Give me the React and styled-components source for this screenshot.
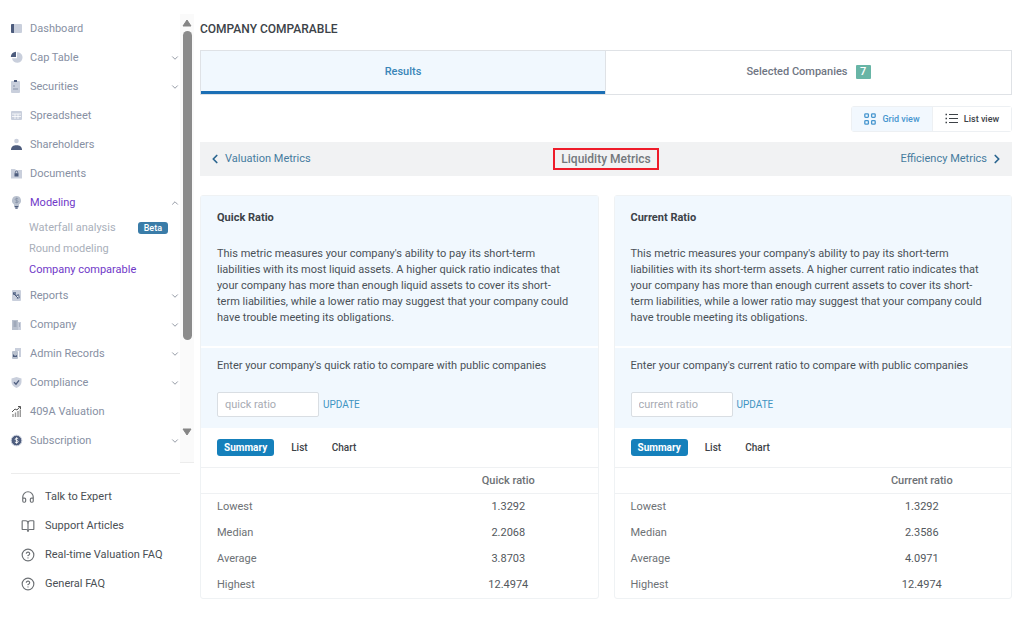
import React, { useState } from 'react';
import styled, { createGlobalStyle } from 'styled-components';
import { BookOpen, ChevronDown, ChevronLeft, ChevronRight, ChevronUp, CircleQuestionMark, Headphones } from 'lucide-react';

const GlobalStyle = createGlobalStyle`
  * {
    box-sizing: border-box;
  }
  body {
    margin: 0;
    background: #fff;
    color: #4a5157;
    font-family: Roboto, "Liberation Sans", sans-serif;
    font-size: 11px;
    line-height: 16px;
  }
  button, input {
    font: inherit;
    color: inherit;
  }
  h1, h2, p {
    margin: 0;
  }
  a {
    color: inherit;
    text-decoration: none;
  }
`;

const Page = styled.div`
  display: flex;
  align-items: flex-start;
`;

const Sidebar = styled.aside`
  flex: none;
  width: 194px;
  padding-top: 14px;
`;

const ScrollArea = styled.div`
  display: flex;
`;

const NavList = styled.nav`
  flex: 1;
  padding-bottom: 8px;
`;

const NavItem = styled.a`
  display: flex;
  align-items: center;
  height: 29px;
  padding-left: 10px;
  gap: 7px;
  color: ${props => (props.$active ? '#7038c8' : '#8790a3')};
  > svg:last-child:not(:first-child) {
    margin-left: auto;
    color: #7f8794;
  }
`;

const SubList = styled.div`
  padding: 0 0 1px 29px;
`;

const SubItem = styled.a`
  display: flex;
  align-items: center;
  justify-content: space-between;
  height: 21px;
  padding-right: 12px;
  white-space: nowrap;
  color: ${props => (props.$active ? '#7038c8' : '#a9afba')};
`;

const Beta = styled.span`
  padding: 0 6px;
  border-radius: 3px;
  background: #3a7ca8;
  color: #fff;
  font-size: 9px;
  font-weight: 500;
  line-height: 12px;
`;

const Scrollbar = styled.div`
  display: flex;
  flex-direction: column;
  align-items: center;
  width: 14px;
  padding: 5px 0 26px;
  background: #fafafa;
  border-bottom: 1px solid #ececec;
`;

const Thumb = styled.div`
  width: 9px;
  height: 309px;
  margin: 4px 0 auto;
  border-radius: 5px;
  background: #8b8b8b;
`;

const HelpList = styled.nav`
  margin: 10px 14px 0 11px;
  padding: 8px 0 0 10px;
  border-top: 1px solid #ececec;
`;

const HelpItem = styled.a`
  display: flex;
  align-items: center;
  gap: 10px;
  height: 29px;
  white-space: nowrap;
  color: #4a4f54;
  svg {
    color: #6d7175;
  }
`;

const Main = styled.main`
  flex: 1;
  min-width: 0;
  padding: 21px 12px 22px 6px;
`;

const Title = styled.h1`
  color: #3c4248;
  font-size: 12px;
  font-weight: 500;
  line-height: 16px;
`;

const Tabs = styled.div`
  display: grid;
  grid-template-columns: 1fr 1fr;
  height: 45px;
  margin-top: 13px;
  border: 1px solid #dfe2e6;
`;

const Tab = styled.button`
  display: flex;
  align-items: center;
  justify-content: center;
  gap: 8px;
  padding: 0 0 2px;
  border: 0;
  border-right: ${props => (props.$active ? '1px solid #dfe2e6' : '0')};
  background: ${props => (props.$active ? '#f1f8fe' : '#fff')};
  box-shadow: ${props => (props.$active ? 'inset 0 -3px #1b6fb5' : 'none')};
  color: ${props => (props.$active ? '#3a86b8' : '#6f7683')};
  font-weight: 500;
`;

const Count = styled.span`
  width: 15px;
  border-radius: 1px;
  background: #68b5a6;
  color: #fff;
  line-height: 14px;
`;

const ViewToggle = styled.div`
  display: flex;
  width: max-content;
  margin: 11px 0 10px auto;
  border: 1px solid #edf0f3;
  border-radius: 3px;
`;

const ViewButton = styled.button`
  display: flex;
  align-items: center;
  justify-content: center;
  gap: 6px;
  width: ${props => (props.$active ? '81px' : '78px')};
  height: 24px;
  padding: 0;
  border: 0;
  border-right: ${props => (props.$active ? '1px solid #edf0f3' : '0')};
  background: ${props => (props.$active ? '#f2f8fe' : '#fff')};
  color: ${props => (props.$active ? '#4796cf' : '#3d4247')};
  font-size: 9px;
  font-weight: 500;
`;

const MetricNav = styled.nav`
  display: grid;
  grid-template-columns: 1fr auto 1fr;
  align-items: center;
  height: 34px;
  padding: 0 8px;
  background: #f1f2f3;
`;

const MetricLink = styled.a`
  display: flex;
  align-items: center;
  justify-self: ${props => (props.$end ? 'end' : 'start')};
  gap: 3px;
  color: #467c9f;
  svg {
    color: #2b6690;
  }
`;

const MetricName = styled.h2`
  padding: 1px 6px;
  border: 2px solid #ee1c2a;
  color: #73777b;
  font-size: 12px;
  font-weight: 500;
  line-height: 16px;
`;

const Cards = styled.div`
  display: grid;
  grid-template-columns: 1fr 1fr;
  gap: 15px;
  margin-top: 19px;
`;

const Card = styled.section`
  border: 1px solid #eff2f4;
  border-radius: 3px;
`;

const Intro = styled.div`
  padding: 14px 16px 20px;
  background: #f1f8fe;
`;

const CardTitle = styled.h2`
  margin-bottom: 20px;
  color: #3c4248;
  font-size: 11px;
  font-weight: 700;
  line-height: 16px;
`;

const Description = styled.p`
  white-space: pre-line;
`;

const Compare = styled.form`
  padding: 10px 16px 11px;
  border-top: 2px solid #fff;
  background: #f1f8fe;
`;

const Entry = styled.div`
  display: flex;
  align-items: center;
  gap: 4px;
  margin-top: 18px;
`;

const RatioInput = styled.input`
  width: 102px;
  height: 25px;
  padding: 0 7px;
  border: 1px solid #d9dee3;
  border-radius: 2px;
  background: #fff;
  &::placeholder {
    color: #a7abb3;
  }
`;

const Update = styled.button`
  padding: 0;
  border: 0;
  background: none;
  color: #3f94c2;
  font-size: 10px;
`;

const Modes = styled.div`
  display: flex;
  align-items: center;
  gap: 10px;
  height: 39px;
  padding: 0 16px;
`;

const Mode = styled.button`
  padding: 0 7px;
  border: 0;
  border-radius: 3px;
  background: ${props => (props.$active ? '#1580bb' : 'none')};
  color: ${props => (props.$active ? '#fff' : '#3d4247')};
  font-size: 10px;
  font-weight: ${props => (props.$active ? 700 : 500)};
  line-height: 17px;
`;

const Table = styled.table`
  width: 100%;
  table-layout: fixed;
  border-collapse: collapse;
  color: #6d7175;
  th, td {
    height: 26px;
    padding: 0;
    font-weight: 400;
  }
  thead th {
    border-top: 1px solid #eff1f3;
    border-bottom: 1px solid #eff1f3;
    font-weight: 500;
  }
  tbody th {
    padding-left: 16px;
    text-align: left;
  }
  td {
    color: #53585d;
    text-align: center;
  }
`;

const LabelColumn = styled.col`
  width: 55%;
`;

const light = '#c9cfdc';
const dark = '#4d5c7d';

const icons = {
  dashboard: <><rect x="1" y="2" width="11" height="9" rx="1" fill={light} /><path d="M2 2h2v9H2a1 1 0 0 1-1-1V3a1 1 0 0 1 1-1z" fill={dark} /></>,
  pie: <><path d="M7 1.200a5.300 5.300 0 1 1-5 6h5z" fill={light} /><path d="M6 .8v5.200H.8A5.200 5.200 0 0 1 6 .8z" fill={dark} /></>,
  clipboard: <><rect x="1" y="1" width="9" height="12" rx="1" fill={light} /><path d="M4 0h3v2H4z" fill={dark} /><path d="M3 6h2M3 9h5" stroke="#8994aa" /></>,
  sheet: <><rect x="1" y="2" width="11" height="9" rx="1" fill={light} /><path d="M2 5h9M2 7.500h9M5 5v5M8 5v5" stroke="#fff" strokeWidth=".8" /></>,
  person: <><circle cx="6.500" cy="3" r="2.300" fill={light} /><path d="M1 12c0-3.500 2.500-4.700 5.500-4.700S12 8.500 12 12z" fill={dark} /></>,
  folder: <><path d="M1 2h4l1 1h6v8.500H1z" fill={light} /><rect x="4.500" y="6.200" width="4" height="3.300" fill={dark} /><path d="M5.300 6.200V5.200a1.200 1.200 0 0 1 2.400 0v1" fill="none" stroke={dark} strokeWidth=".8" /></>,
  bulb: <><path d="M6.500 0a4.600 4.600 0 0 0-2.500 8.400V10h5V8.400A4.600 4.600 0 0 0 6.500 0z" fill="#b9c1ce" /><path d="M8.200 3C7 2 5.200 2.400 5.200 3.500c0 1.500 3 .8 3 2.200 0 1.100-2 1.300-3.100.4M6.700 1.700v5.500" fill="none" stroke="#8792a7" strokeWidth=".8" /><path d="M4.500 10.700h4M5.300 12.200h2.400" stroke={dark} strokeWidth="1.200" /></>,
  report: <><rect x="2" y="1" width="9" height="11" rx="1" fill={light} /><path d="M3 3h3v3H3zM6 6l3-1 1 4-3 1z" fill="#71809c" /><circle cx="7.500" cy="8" r="1" fill="#fff" /><path d="M3 4l5 5" stroke={dark} /></>,
  building: <><rect x="2" y="2" width="6" height="10" fill="#b9c1ce" /><path d="M8 4h3v8H8z" fill={light} /><path d="M3.500 4h3M3.500 6h3M3.500 8h3M9 6h1M9 8h1" stroke="#8792a7" /></>,
  records: <><path d="M5 1h6v9H9V4H5z" fill={light} /><rect x="2" y="4" width="6" height="8" rx="1" fill="#b9c1ce" /><path d="M3 10V7l2 2 2-1v2z" fill={dark} /></>,
  shield: <><path d="M6.500 1L11.500 2.500V6c0 3-2.500 4.800-5 6C4 10.800 1.500 9 1.500 6V2.500z" fill={light} /><path d="M4 6.300l2 1.900 3-3.800" fill="none" stroke={dark} strokeWidth="1.300" /></>,
  growth: <><path d="M3 12V9M5.500 12V7.500M8 12V6M10.300 12V4.500" stroke="#9a9a9a" strokeWidth="1.400" /><path d="M2 7l3-3 2 1 3-3.300M8 1.500h2.500V4" fill="none" stroke="#555" strokeWidth="1" /></>,
  dollar: <><circle cx="6.500" cy="6.500" r="5.300" fill={dark} stroke={light} strokeWidth="1" /><path d="M8.200 4.800c-1-.9-3-.6-3 .5 0 1.400 3 .8 3 2.300 0 1.200-2.100 1.400-3.300.4M6.600 3.300v6.400" fill="none" stroke="#fff" strokeWidth=".9" /></>,
};

const NavIcon = ({ name }) => (
  <svg width="13" height="13" viewBox="0 0 13 13" aria-hidden="true">{icons[name]}</svg>
);

const GridIcon = () => (
  <svg width="12" height="12" viewBox="0 0 12 12" fill="none" stroke="currentColor" strokeWidth="1.3" aria-hidden="true">
    <rect x=".8" y=".8" width="3.600" height="3.600" rx=".8" />
    <rect x="7.600" y=".8" width="3.600" height="3.600" rx=".8" />
    <rect x=".8" y="7.600" width="3.600" height="3.600" rx=".8" />
    <rect x="7.600" y="7.600" width="3.600" height="3.600" rx=".8" />
  </svg>
);

const ListIcon = () => (
  <svg width="13" height="12" viewBox="0 0 13 12" stroke="currentColor" strokeWidth="1" aria-hidden="true">
    <path d="M4 1.500h9M4 5.500h9M4 9.500h9" />
    <path d="M.5 1.500H2M.5 5.500H2M.5 9.500H2" strokeWidth="1.600" />
  </svg>
);

const ScrollArrow = ({ down }) => (
  <svg width="10" height="8" viewBox="0 0 10 8" aria-hidden="true">
    <path d={down ? 'M1 1h8L5 7z' : 'M1 7h8L5 1z'} fill="#858585" stroke="#858585" strokeLinejoin="round" />
  </svg>
);

const topItems = [
  ['Dashboard', 'dashboard'],
  ['Cap Table', 'pie', true],
  ['Securities', 'clipboard', true],
  ['Spreadsheet', 'sheet'],
  ['Shareholders', 'person'],
  ['Documents', 'folder'],
];

const lowerItems = [
  ['Reports', 'report', true],
  ['Company', 'building', true],
  ['Admin Records', 'records', true],
  ['Compliance', 'shield', true],
  ['409A Valuation', 'growth'],
  ['Subscription', 'dollar', true],
];

const helpItems = [
  ['Talk to Expert', Headphones],
  ['Support Articles', BookOpen],
  ['Real-time Valuation FAQ', CircleQuestionMark],
  ['General FAQ', CircleQuestionMark],
];

const metrics = [
  {
    name: 'quick',
    title: 'Quick',
    text: `This metric measures your company's ability to pay its short-term
liabilities with its most liquid assets. A higher quick ratio indicates that
your company has more than enough liquid assets to cover its short-
term liabilities, while a lower ratio may suggest that your company could
have trouble meeting its obligations.`,
    rows: [['Lowest', '1.3292'], ['Median', '2.2068'], ['Average', '3.8703'], ['Highest', '12.4974']],
  },
  {
    name: 'current',
    title: 'Current',
    text: `This metric measures your company's ability to pay its short-term
liabilities with its short-term assets. A higher current ratio indicates that
your company has more than enough current assets to cover its short-
term liabilities, while a lower ratio may suggest that your company could
have trouble meeting its obligations.`,
    rows: [['Lowest', '1.3292'], ['Median', '2.3586'], ['Average', '4.0971'], ['Highest', '12.4974']],
  },
];

const NavItems = ({ items }) => items.map(([label, icon, expandable]) => (
  <NavItem href="#" key={label}>
    <NavIcon name={icon} />
    {label}
    {expandable && <ChevronDown size={10} />}
  </NavItem>
));

const MetricCard = ({ metric }) => {
  const [mode, setMode] = useState('Summary');
  const id = `${metric.name}-ratio`;
  return (
    <Card>
      <Intro>
        <CardTitle>{metric.title} Ratio</CardTitle>
        <Description>{metric.text}</Description>
      </Intro>
      <Compare onSubmit={e => e.preventDefault()}>
        <label htmlFor={id}>Enter your company's {metric.name} ratio to compare with public companies</label>
        <Entry>
          <RatioInput id={id} placeholder={`${metric.name} ratio`} />
          <Update>UPDATE</Update>
        </Entry>
      </Compare>
      <Modes>
        {['Summary', 'List', 'Chart'].map(name => (
          <Mode type="button" key={name} $active={mode === name} onClick={() => setMode(name)}>{name}</Mode>
        ))}
      </Modes>
      <Table>
        <colgroup><LabelColumn /><col /></colgroup>
        <thead>
          <tr><th /><th scope="col">{metric.title} ratio</th></tr>
        </thead>
        <tbody>
          {metric.rows.map(([label, value]) => (
            <tr key={label}><th scope="row">{label}</th><td>{value}</td></tr>
          ))}
        </tbody>
      </Table>
    </Card>
  );
};

const App = () => (
  <Page>
    <GlobalStyle />
    <Sidebar>
      <ScrollArea>
        <NavList>
          <NavItems items={topItems} />
          <NavItem href="#" $active><NavIcon name="bulb" />Modeling<ChevronUp size={10} /></NavItem>
          <SubList>
            <SubItem href="#">Waterfall analysis<Beta>Beta</Beta></SubItem>
            <SubItem href="#">Round modeling</SubItem>
            <SubItem href="#" $active>Company comparable</SubItem>
          </SubList>
          <NavItems items={lowerItems} />
        </NavList>
        <Scrollbar>
          <ScrollArrow />
          <Thumb />
          <ScrollArrow down />
        </Scrollbar>
      </ScrollArea>
      <HelpList>
        {helpItems.map(([label, Icon]) => (
          <HelpItem href="#" key={label}><Icon size={14} />{label}</HelpItem>
        ))}
      </HelpList>
    </Sidebar>
    <Main>
      <Title>COMPANY COMPARABLE</Title>
      <Tabs>
        <Tab $active>Results</Tab>
        <Tab>Selected Companies <Count>7</Count></Tab>
      </Tabs>
      <ViewToggle>
        <ViewButton $active><GridIcon />Grid view</ViewButton>
        <ViewButton><ListIcon />List view</ViewButton>
      </ViewToggle>
      <MetricNav>
        <MetricLink href="#"><ChevronLeft size={14} strokeWidth={3} />Valuation Metrics</MetricLink>
        <MetricName>Liquidity Metrics</MetricName>
        <MetricLink href="#" $end>Efficiency Metrics<ChevronRight size={14} strokeWidth={3} /></MetricLink>
      </MetricNav>
      <Cards>
        {metrics.map(metric => <MetricCard key={metric.name} metric={metric} />)}
      </Cards>
    </Main>
  </Page>
);

export default App;
